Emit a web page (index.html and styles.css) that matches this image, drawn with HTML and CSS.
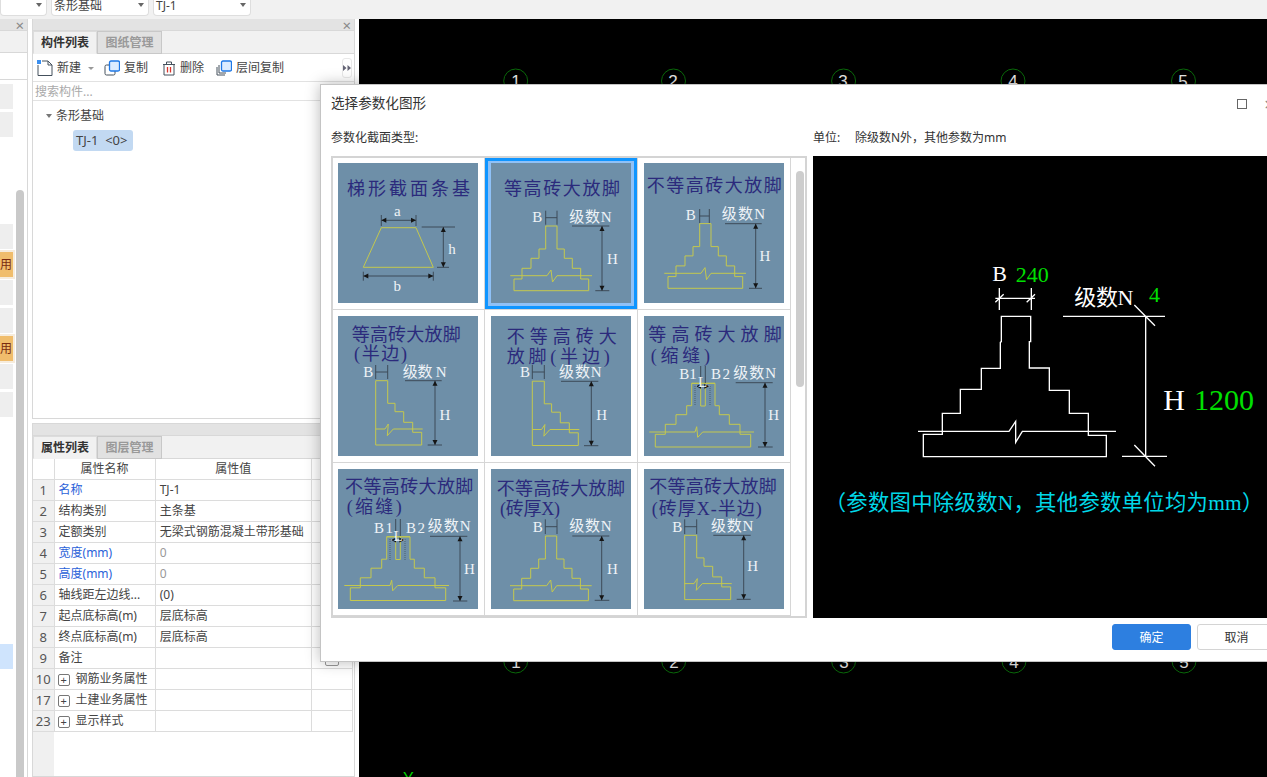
FILE: index.html
```html
<!DOCTYPE html>
<html lang="zh-CN">
<head>
<meta charset="utf-8">
<title>选择参数化图形</title>
<link rel="stylesheet" href="styles.css">
</head>
<body>
<svg class="defs" width="0" height="0">
  <defs>
    <g id="foot">
      <path d="M54.7 63V86H48V95.3H40V105.3H31V116H23V127.7H97.7V116H89.7V105.3H81.3V95.3H73.3V86H66V63Z"/>
      <path d="M19.3 112.7H56L60 107L61.5 119L66 112.7H101"/>
    </g>
    <g id="half">
      <path d="M37.7 64.7H49.7V87.3H57V95.7H65.7V106.3H74.7V116.3H83.7V129H37.7Z"/>
      <path d="M37.7 113H47L50.3 108L49.3 119.7L55.3 113H84.7"/>
    </g>
    <g id="slot">
      <path d="M47.7 67.3V89.7H42.7V98.7H32V108.3H21.3V118.3H11.3V131H106.7V118.3H96V108.3H85.3V98.7H75.3V89.7H71V67.3Z"/>
      <path d="M56.7 67.3V90H61.3V67.3M47.7 67.3H71"/>
      <path d="M5.3 116H51L52.7 110.7L53.7 121.3L58.7 116H110"/>
    </g>
    <path id="aup" d="M0 0L-2.5 5H2.5Z"/>
    <path id="adn" d="M0 0L-2.5 -5H2.5Z"/>
    <path id="alf" d="M0 0L5 -2.5V2.5Z"/>
    <path id="art" d="M0 0L-5 -2.5V2.5Z"/>
  </defs>
</svg>

<div class="app">
  <header class="topbar">
    <div class="sel sel-a"><span class="caret"></span></div>
    <div class="sel sel-b"><span>条形基础</span><span class="caret"></span></div>
    <div class="sel sel-c"><span>TJ-1</span><span class="caret"></span></div>
  </header>

  <main class="workspace">
    <aside class="side">
      <div class="panel-head"><span class="x">×</span></div>
      <div class="side-tabs"></div>
      <div class="side-tool"></div>
      <div class="side-body">
        <div class="rows">
          <div class="r"></div><div class="r"></div><div class="r none"></div><div class="r none"></div><div class="r none"></div>
          <div class="r"></div><div class="r on"><span>用</span></div><div class="r"></div><div class="r"></div><div class="r on"><span>用</span></div>
          <div class="r"></div><div class="r"></div>
          <div class="r none"></div><div class="r none"></div><div class="r none"></div><div class="r none"></div><div class="r none"></div><div class="r none"></div><div class="r none"></div><div class="r none"></div>
          <div class="r sel-row"></div>
        </div>
        <div class="sbar"></div>
      </div>
    </aside>

    <section class="mid">
      <div class="panel panel-top">
        <div class="panel-head"><span class="x">×</span></div>
        <div class="tabs"><span class="tab active">构件列表</span><span class="tab">图纸管理</span></div>
        <div class="tool">
          <span class="ti ti-new">
            <svg width="16" height="17" viewBox="0 0 16 17"><path class="ic-line" d="M1 5V15.5H15V5L11 1H5"/><path class="ic-line" d="M11 1V5H15"/><rect class="ic-dot" x="0" y="0" width="4" height="4"/></svg>
            新建<i class="mini"></i>
          </span>
          <span class="ti ti-copy">
            <svg width="16" height="16" viewBox="0 0 16 16"><rect class="ic-line" x="1" y="5" width="10" height="10" rx="1.5"/><rect class="ic-blue" x="5.5" y="1" width="10" height="10" rx="1.5"/></svg>
            复制
          </span>
          <span class="ti ti-del">
            <svg width="14" height="15" viewBox="0 0 14 15"><path class="ic-line" d="M1 3.5H13M4.5 3.5V1H9.5V3.5M2 3.5V14H12V3.5"/><path class="ic-red" d="M5.5 6V11.5M8.5 6V11.5"/></svg>
            删除
          </span>
          <span class="ti ti-layer">
            <svg width="16" height="16" viewBox="0 0 16 16"><path class="ic-line" d="M3 5V13H10M1 7V15H9"/><rect class="ic-blue" x="5.5" y="1" width="10" height="10" rx="1.5"/></svg>
            层间复制
          </span>
          <span class="more"><svg width="8" height="6" viewBox="0 0 8 6"><path class="ic-tri" d="M0 0L3.5 3L0 6ZM4.5 0L8 3L4.5 6Z"/></svg></span>
        </div>
        <div class="search">搜索构件...</div>
        <div class="tree">
          <div class="node"><i class="tri"></i>条形基础</div>
          <div class="leaf">TJ-1 &nbsp;&lt;0&gt;</div>
        </div>
      </div>

      <div class="panel panel-bot">
        <div class="panel-head"></div>
        <div class="tabs"><span class="tab active">属性列表</span><span class="tab">图层管理</span></div>
        <div class="tbl-wrap">
          <table class="props">
            <colgroup><col class="c0"><col class="c1"><col class="c2"><col class="c3"></colgroup>
            <thead><tr><th class="no"></th><th>属性名称</th><th>属性值</th><th></th></tr></thead>
            <tbody>
              <tr><td class="no">1</td><td class="blue">名称</td><td>TJ-1</td><td></td></tr>
              <tr><td class="no">2</td><td>结构类别</td><td>主条基</td><td></td></tr>
              <tr><td class="no">3</td><td>定额类别</td><td>无梁式钢筋混凝土带形基础</td><td></td></tr>
              <tr><td class="no">4</td><td class="blue">宽度(mm)</td><td class="mute">0</td><td></td></tr>
              <tr><td class="no">5</td><td class="blue">高度(mm)</td><td class="mute">0</td><td></td></tr>
              <tr><td class="no">6</td><td>轴线距左边线...</td><td>(0)</td><td></td></tr>
              <tr><td class="no">7</td><td>起点底标高(m)</td><td>层底标高</td><td></td></tr>
              <tr><td class="no">8</td><td>终点底标高(m)</td><td>层底标高</td><td></td></tr>
              <tr><td class="no">9</td><td>备注</td><td></td><td><span class="dots"></span></td></tr>
              <tr><td class="no">10</td><td><i class="plus">+</i>钢筋业务属性</td><td></td><td></td></tr>
              <tr><td class="no">17</td><td><i class="plus">+</i>土建业务属性</td><td></td><td></td></tr>
              <tr><td class="no">23</td><td><i class="plus">+</i>显示样式</td><td></td><td></td></tr>
            </tbody>
          </table>
        </div>
      </div>
    </section>

    <section class="canvas">
      <svg class="canvas-svg" viewBox="0 0 908 758" width="908" height="758">
        <g class="bub">
          <circle cx="156.7" cy="62" r="12"/><circle cx="314.5" cy="62" r="12"/><circle cx="484.6" cy="62" r="12"/><circle cx="654" cy="62" r="12"/><circle cx="824.5" cy="62" r="12"/>
          <circle cx="156.7" cy="642" r="12"/><circle cx="314.7" cy="642" r="12"/><circle cx="484.6" cy="642" r="12"/><circle cx="655" cy="642" r="12"/><circle cx="825" cy="642" r="12"/>
        </g>
        <g class="bub-n">
          <text x="157" y="68">1</text><text x="314" y="68">2</text><text x="484" y="68">3</text><text x="654" y="68">4</text><text x="824" y="68">5</text>
          <text x="157" y="649">1</text><text x="315" y="649">2</text><text x="485" y="649">3</text><text x="655" y="649">4</text><text x="825" y="649">5</text>
        </g>
        <text class="axis" x="44" y="765">Y</text>
      </svg>
    </section>
  </main>

  <div class="dialog">
    <div class="dlg-title">
      <span>选择参数化图形</span>
      <span class="win-max"></span>
      <span class="win-close">×</span>
    </div>
    <div class="dlg-body">
      <div class="lbl">参数化截面类型:</div>
      <div class="lbl"><span class="unit">单位:</span>除级数N外，其他参数为mm</div>
      <div class="list">
        <div class="grid">
          <div class="cell">
            <svg class="thumb" viewBox="0 0 140 140" width="140" height="140">
              <text class="th" x="9" y="32" textLength="123">梯形截面条基</text>
              <path class="y" d="M43.3 64.7H78L95.3 104.3H25.3Z"/>
              <path class="d" d="M43.3 52V63M78 52V63M43.3 57.3H78M83.7 64H117M99 104.3H111M105.3 64V104.3M25.3 108.7V117.7M95.3 108.7V117.7M25.3 113H95.3"/>
              <use class="a" href="#alf" x="43.3" y="57.3"/><use class="a" href="#art" x="78" y="57.3"/><use class="a" href="#aup" x="105.3" y="64"/><use class="a" href="#adn" x="105.3" y="104.3"/><use class="a" href="#alf" x="25.3" y="113"/><use class="a" href="#art" x="95.3" y="113"/>
              <text class="tl c" x="59.3" y="53">a</text><text class="tl c" x="114" y="91">h</text><text class="tl c" x="59.3" y="128">b</text>
            </svg>
          </div>
          <div class="cell picked">
            <svg class="thumb" viewBox="0 0 140 140" width="140" height="140">
              <text class="th" x="13" y="32" textLength="116">等高砖大放脚</text>
              <use class="y" href="#foot"/>
              <path class="d" d="M54.7 47.7V61.7M66 47.7V61.7M54.7 54.7H66M81 63H118.3M104.3 127.7H118.3M111 63V127.7"/>
              <use class="a" href="#aup" x="111" y="63"/><use class="a" href="#adn" x="111" y="127.7"/>
              <text class="tl c" x="46.3" y="59">B</text><text class="tl" x="78.3" y="59" textLength="42.4">级数N</text><text class="tl c" x="121.3" y="101">H</text>
            </svg>
          </div>
          <div class="cell">
            <svg class="thumb" viewBox="0 0 140 140" width="140" height="140">
              <text class="th" x="2.7" y="29" textLength="135">不等高砖大放脚</text>
              <use class="y" href="#foot" x="1" y="-2.4"/>
              <path class="d" d="M55.7 46V60M65.3 46V60M55.7 53H65.3M81 60.7H117.7M105 125.3H118M111.7 60.7V125.3"/>
              <use class="a" href="#aup" x="111.7" y="60.7"/><use class="a" href="#adn" x="111.7" y="125.3"/>
              <text class="tl c" x="46.7" y="57">B</text><text class="tl" x="77.7" y="55.5" textLength="43.3">级数N</text><text class="tl c" x="121" y="98">H</text>
            </svg>
          </div>
          <div class="cell">
            <svg class="thumb" viewBox="0 0 140 140" width="140" height="140">
              <text class="th" x="13.7" y="25" textLength="109">等高砖大放脚</text>
              <text class="th" x="16" y="44" textLength="53">(半边)</text>
              <use class="y" href="#half"/>
              <path class="d" d="M37.7 49V63M49.7 49V63M37.7 56H49.7M67 64.7H103.7M89.7 129H104M97 64.7V129"/>
              <use class="a" href="#aup" x="97" y="64.7"/><use class="a" href="#adn" x="97" y="129"/>
              <text class="tl c" x="30.3" y="61">B</text><text class="tl" x="64.7" y="60.7" textLength="44">级数 N</text><text class="tl c" x="107" y="103.5">H</text>
            </svg>
          </div>
          <div class="cell">
            <svg class="thumb" viewBox="0 0 140 140" width="140" height="140">
              <text class="th" x="15.7" y="27" textLength="110">不等高砖大</text>
              <text class="th" x="15.7" y="46.7" textLength="103">放脚(半边)</text>
              <use class="y" href="#half" x="3.6" y="0.5"/>
              <path class="d" d="M41.3 49V63M53.3 49V63M41.3 56H53.3M70 65.3H107.3M93 129.7H107.3M100.3 65.3V129.7"/>
              <use class="a" href="#aup" x="100.3" y="65.3"/><use class="a" href="#adn" x="100.3" y="129.7"/>
              <text class="tl c" x="34" y="61">B</text><text class="tl" x="68" y="60.7" textLength="42.7">级数N</text><text class="tl c" x="110.7" y="103.5">H</text>
            </svg>
          </div>
          <div class="cell">
            <svg class="thumb" viewBox="0 0 140 140" width="140" height="140">
              <text class="th" x="4.3" y="25" textLength="133.4">等高砖大放脚</text>
              <text class="th" x="6.7" y="45.7" textLength="59.3">(缩缝)</text>
              <use class="y" href="#slot"/>
              <path class="d" d="M56.7 50V67M61.3 50V67M91.7 66.7H128.7M114 131H128.7M121 66.7V131"/>
              <path class="dash" d="M51 70V90M66 70V90"/>
              <path class="wh" d="M52 70.3H65.3"/>
              <use class="a" href="#aup" x="121" y="66.7"/><use class="a" href="#adn" x="121" y="131"/><use class="a" href="#alf" x="52" y="70.3"/><use class="a" href="#art" x="65.3" y="70.3"/>
              <text class="tl" x="35.3" y="63" textLength="17.4">B1</text><text class="tl" x="67" y="63" textLength="19">B2</text><text class="tl c" x="58.7" y="71">L</text><text class="tl" x="89.3" y="62.3" textLength="42.7">级数N</text><text class="tl c" x="129.7" y="103.5">H</text>
            </svg>
          </div>
          <div class="cell">
            <svg class="thumb" viewBox="0 0 140 140" width="140" height="140">
              <text class="th" x="7" y="24.3" textLength="128.3">不等高砖大放脚</text>
              <text class="th" x="8.7" y="44.3" textLength="55">(缩缝)</text>
              <use class="y" href="#slot" x="1" y="0.5"/>
              <path class="d" d="M57.7 50V67M62.3 50V67M92 67.3H129.3M115 132H129.3M122 67.3V132"/>
              <path class="dash" d="M52 70V91M67 70V91"/>
              <path class="wh" d="M53 71H66.3"/>
              <use class="a" href="#aup" x="122" y="67.3"/><use class="a" href="#adn" x="122" y="132"/><use class="a" href="#alf" x="53" y="71"/><use class="a" href="#art" x="66.3" y="71"/>
              <text class="tl" x="36" y="63.7" textLength="19">B1</text><text class="tl" x="68" y="63.7" textLength="19">B2</text><text class="tl c" x="60" y="71.5">L</text><text class="tl" x="89.7" y="62" textLength="43">级数N</text><text class="tl c" x="131.3" y="104.5">H</text>
            </svg>
          </div>
          <div class="cell">
            <svg class="thumb" viewBox="0 0 140 140" width="140" height="140">
              <text class="th" x="5.7" y="26" textLength="128.3">不等高砖大放脚</text>
              <text class="th" x="9" y="46" textLength="60">(砖厚X)</text>
              <use class="y" href="#foot" x="-0.3" y="4"/>
              <path class="d" d="M54.3 50.3V65M66 50.3V65M54.3 57.7H66M81.3 67H118.3M103.7 131.3H118.3M110.7 67V131.3"/>
              <use class="a" href="#aup" x="110.7" y="67"/><use class="a" href="#adn" x="110.7" y="131.3"/>
              <text class="tl c" x="46.7" y="63.3">B</text><text class="tl" x="78.3" y="62" textLength="42.4">级数N</text><text class="tl c" x="121.3" y="105.3">H</text>
            </svg>
          </div>
          <div class="cell">
            <svg class="thumb" viewBox="0 0 140 140" width="140" height="140">
              <text class="th" x="5.3" y="24.3" textLength="127.4">不等高砖大放脚</text>
              <text class="th" x="7.7" y="46" textLength="110">(砖厚X-半边)</text>
              <use class="y" href="#half" x="3" y="1.6"/>
              <path class="d" d="M40.7 50.3V65M52.7 50.3V65M40.7 57.7H52.7M69.3 66.3H106.7M92.7 130.3H106.7M99.7 66.3V130.3"/>
              <use class="a" href="#aup" x="99.7" y="66.3"/><use class="a" href="#adn" x="99.7" y="130.3"/>
              <text class="tl c" x="33.3" y="62.7">B</text><text class="tl" x="67" y="61.7" textLength="42.3">级数N</text><text class="tl c" x="108.7" y="102">H</text>
            </svg>
          </div>
        </div>
        <div class="vscroll"><div class="vthumb"></div></div>
      </div>
      <div class="preview">
        <svg class="pv" viewBox="9 -249 1362 1380" width="454" height="460">
          <path class="pl" d="M574 308V232H662V308H658V387H718V454H778V523H835V589H889V653H340V586H397V523H451V451H514V388H571V310Z"/>
          <path class="pl" d="M324 577H597L617 547L617 610L637 577H918"/>
          <path class="pl" d="M568 147V213M664 147V213M556 178H675M556 190L581 166M650 190L675 166"/>
          <path class="pl" d="M759 232H1065M936 652H1071M1007 232V652M973 198L1035 260M973 618L1035 682"/>
          <text class="pt pw" x="547" y="125">B</text>
          <text class="pt pg" x="617" y="128">240</text>
          <text class="pt pw" x="793" y="197" textLength="177">级数N</text>
          <text class="pt pg" x="1017" y="190">4</text>
          <text class="pb pw" x="1060" y="514">H</text>
          <text class="pb pg" x="1152" y="512">1200</text>
          <text class="pc" x="44" y="814" textLength="1316">（参数图中除级数N，其他参数单位均为mm）</text>
        </svg>
      </div>
    </div>
    <div class="dlg-foot">
      <button class="btn ok">确定</button>
      <button class="btn">取消</button>
    </div>
  </div>
</div>
</body>
</html>
```

FILE: styles.css
```css
* { box-sizing: border-box; }
html, body { margin: 0; height: 100%; overflow: hidden; background: #fff; }
body { font: 12px/1.2 "Noto Sans", "Noto Sans CJK SC", sans-serif; color: #333; }
.defs { display: block; height: 0; width: 0; }

.app { position: relative; width: 1267px; height: 777px; display: flex; flex-direction: column; overflow: hidden; }

/* top bar */
.topbar { height: 19px; flex: none; background: #f1f1f1; display: flex; gap: 4px; }
.sel { height: 16px; background: #fff; border: 1px solid #dedede; border-top: 0; border-radius: 0 0 4px 4px; display: flex; justify-content: space-between; padding: 0 4px 0 2px; line-height: 11px; color: #444; }
.sel-a { width: 47px; justify-content: flex-end; }
.sel-b, .sel-c { width: 98px; }
.caret { width: 0; height: 0; margin-top: 3px; border: 3px solid transparent; border-top: 4px solid #666; border-bottom: 0; }

/* layout */
.workspace { flex: 1; display: flex; min-height: 0; }
.side { width: 28px; flex: none; margin-right: 4px; border-right: 1px solid #d8d8d8; display: flex; flex-direction: column; }
.panel-head { height: 12px; flex: none; background: #e3e3e3; border-bottom: 1px solid #d8d8d8; text-align: right; }
.x { font-size: 15px; line-height: 12px; color: #888; padding-right: 3px; display: block; }
.side-tabs { height: 22px; background: #f1f1f1; border-bottom: 1px solid #d8d8d8; }
.side-tool { height: 27px; border-bottom: 1px solid #d8d8d8; }
.side-body { flex: 1; display: flex; min-height: 0; }
.rows { width: 13px; padding-top: 4px; display: flex; flex-direction: column; gap: 3px; }
.r { height: 25px; flex: none; background: #eee; }
.r.none { background: transparent; }
.r.on { background: #f0bd6c; box-shadow: 0 0 0 2px #f6ecdd; color: #7a2a10; font-size: 12px; line-height: 25px; overflow: hidden; }
.r.sel-row { background: #cfe4fd; }
.sbar { width: 8px; margin: 110px 0 0 3px; background: #c9c9c9; border-radius: 4px 4px 0 0; }

.mid { width: 323px; flex: none; margin-right: 4px; display: flex; flex-direction: column; gap: 4px; }
.panel { border: solid #d8d8d8; border-width: 0 1px 1px 1px; display: flex; flex-direction: column; }
.panel-top { height: 400px; flex: none; }
.panel-bot { flex: 1; min-height: 0; border-top: 1px solid #d8d8d8; }
.tabs { height: 23px; flex: none; background: #f1f1f1; border-bottom: 1px solid #d8d8d8; display: flex; }
.tab { width: 65px; height: 23px; text-align: center; line-height: 21px; font-weight: 700; color: #999; background: #e1e1e1; border: 1px solid #c8c8c8; }
.tab.active { width: 64px; color: #333; background: #f1f1f1; border-color: #dcdcdc; border-bottom-color: #f1f1f1; }

.tool { height: 28px; flex: none; border-bottom: 1px solid #e2e2e2; display: flex; align-items: center; padding: 1px 0 0 4px; color: #444; }
.ti { display: flex; align-items: center; gap: 4px; flex: none; }
.ti-new { width: 67px; }
.ti-copy { width: 58px; }
.ti-del { width: 54px; }
.ti-layer { width: 127px; }
.mini { width: 0; height: 0; margin-left: 3px; border: 3px solid transparent; border-top: 3px solid #999; border-bottom: 0; }
.ic-line { fill: none; stroke: #44505c; stroke-width: 1; }
.ic-blue { fill: #dcecff; stroke: #1e78e6; stroke-width: 1.3; }
.ic-dot { fill: #3a8ff0; }
.ic-red { fill: none; stroke: #d8342c; stroke-width: 1.3; }
.ic-tri { fill: #667; }
.more { width: 10px; height: 20px; margin-left: -1px; border: 1px solid #e8e8e8; border-radius: 3px; display: flex; align-items: center; justify-content: center; overflow: hidden; }
.search { height: 19px; flex: none; border-bottom: 1px solid #e2e2e2; color: #aaa; padding-left: 2px; line-height: 19px; }
.tree { flex: 1; padding-top: 4px; color: #444; }
.node { height: 22px; line-height: 22px; padding-left: 13px; display: flex; align-items: center; gap: 4px; }
.tri { width: 0; height: 0; border: 3px solid transparent; border-top: 4px solid #777; border-bottom: 0; }
.leaf { width: 60px; height: 21px; margin: 3px 0 0 40px; padding-left: 3px; background: #c2d9f2; border-radius: 3px; font-size: 13px; line-height: 20px; white-space: nowrap; }

.tbl-wrap { flex: 1; min-height: 0; background: linear-gradient(to right, #f0f0f0 21px, #fff 21px); }
.props { table-layout: fixed; width: 320px; border-collapse: collapse; background: #fff; }
.c0 { width: 21px; } .c1 { width: 101px; } .c2 { width: 156px; } .c3 { width: 41px; }
.props th, .props td { height: 21px; padding: 0 0 0 4px; border: 1px solid #dcdcdc; border-top: 0; font-weight: 400; font-size: 12px; line-height: 14px; color: #444; white-space: nowrap; overflow: hidden; }
.props th { height: 20px; text-align: center; background: #fff; padding: 0; }
.props th:first-child, .props td:first-child { border-left: 0; }
.props .no { background: #f0f0f0; text-align: center; padding: 0; font-size: 13px; color: #555; }
.props th.no { background: #fff; }
.props .blue { color: #2b62d9; }
.props .mute { color: #999; }
.plus { display: inline-block; width: 12px; height: 12px; margin: 0 6px 0 -1px; border: 1px solid #777; border-radius: 2px; font-style: normal; font-size: 11px; line-height: 9px; text-align: center; vertical-align: -1px; color: #444; }
.dots { display: block; width: 14px; height: 8px; margin: 8px 0 0 9px; border: 1px solid #999; border-radius: 2px; }

/* canvas */
.canvas { flex: 1; background: #000; overflow: hidden; min-width: 0; }
.canvas-svg { display: block; }
.bub circle { fill: none; stroke: #0b6b0b; stroke-width: 1; }
.bub-n text { fill: #e8e8e8; font: 17px "Liberation Sans", sans-serif; text-anchor: middle; }
.axis { fill: #00d000; font: 16px "Liberation Sans", sans-serif; }

/* dialog */
.dialog { position: absolute; left: 320px; top: 84px; width: 967px; height: 578px; background: #fff; border: 1px solid #c4c4c4; box-shadow: 0 0 14px rgba(0, 0, 0, .28); display: flex; flex-direction: column; padding: 0 10px; }
.dlg-title { height: 37px; flex: none; display: flex; align-items: center; font-size: 13.6px; color: #333; }
.win-max { width: 10px; height: 10px; margin-left: 811px; border: 1px solid #666; }
.win-close { margin-left: 17px; font-size: 18px; color: #888; line-height: 10px; }
.dlg-body { display: grid; grid-template-columns: 476px 470px; column-gap: 6px; grid-template-rows: 34px 462px; flex: none; }
.lbl { font-size: 12px; color: #333; padding-top: 9px; }
.unit { display: inline-block; width: 42px; }
.list { border: 2px solid #d4d4d4; display: flex; overflow: hidden; }
.grid { display: grid; grid-template-columns: 152px 153px 153px; grid-template-rows: 152px 153px 153px; flex: none; }
.cell { padding: 6px 0 0 6px; border: solid #d6d6d6; border-width: 0 1px 1px 0; }
.cell:nth-child(-n+3) { padding-top: 5px; }
.cell:nth-child(3n+1) { padding-left: 5px; }
.cell.picked { box-shadow: inset 0 0 0 3px #0f95ff, inset 0 0 0 6px #8fc1f7; }
.thumb { display: block; background: #6e8fa8; }
.vscroll { flex: 1; padding: 13px 0 0 5px; }
.vthumb { width: 8px; height: 216px; background: #cdcdcd; border-radius: 4px; }

.th { fill: #2b2a7c; font: 18px "Liberation Serif", "Noto Sans CJK SC", serif; }
.tl { fill: #eef3f7; font: 15px "Liberation Serif", "Noto Sans CJK SC", serif; }
.tl.c { text-anchor: middle; }
.y { fill: none; stroke: #c4c84e; stroke-width: 1; }
.d { fill: none; stroke: #3d4a58; stroke-width: 1; }
.a { fill: #151515; }
.dash { fill: none; stroke: #3d4a58; stroke-width: .7; stroke-dasharray: 1 1; }
.wh { stroke: #eef3f7; stroke-width: 1; }

.preview { background: #000; overflow: hidden; }
.pv { display: block; }
.pl { fill: none; stroke: #fff; stroke-width: 4; }
.pt { font: 66px "Liberation Serif", "Noto Sans CJK SC", serif; }
.pb { font: 90px "Liberation Serif", "Noto Sans CJK SC", serif; }
.pw { fill: #fff; }
.pg { fill: #00e000; }
.pc { fill: #00d8e8; font: 64px "Liberation Serif", "Noto Sans CJK SC", serif; }

.dlg-foot { flex: 1; display: flex; justify-content: flex-end; align-items: flex-start; gap: 6px; padding-top: 6px; }
.btn { width: 79px; height: 26px; padding: 0; border: 1px solid #d4d4d4; border-radius: 3px; background: #fff; color: #333; font: 12px "Noto Sans", "Noto Sans CJK SC", sans-serif; }
.btn.ok { background: #2d7fe0; border-color: #2d7fe0; color: #fff; }
```
